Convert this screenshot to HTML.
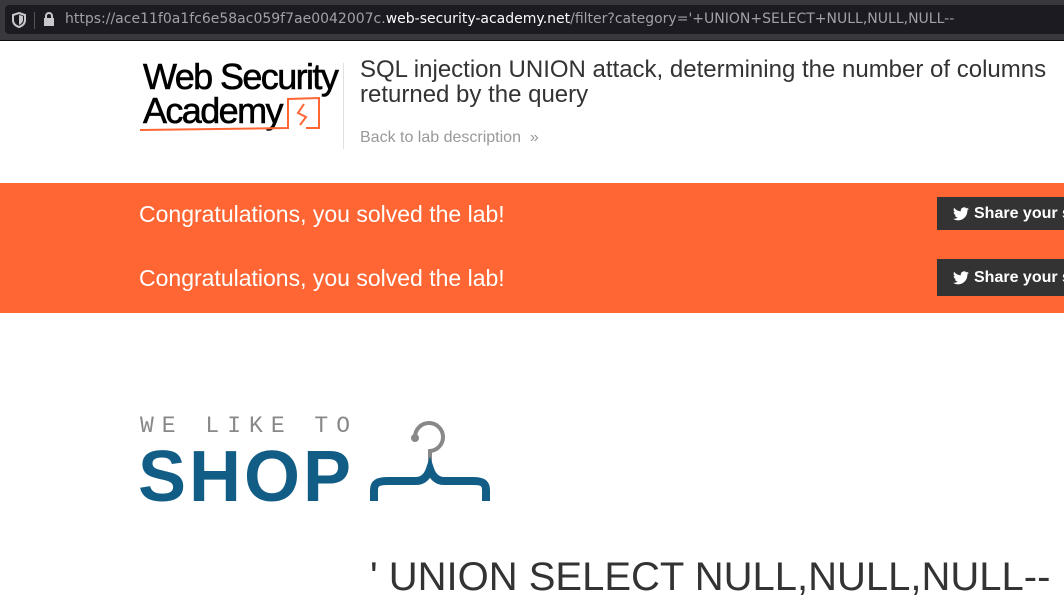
<!DOCTYPE html>
<html><head><style>
body{margin:0;width:1064px;height:615px;overflow:hidden;background:#fff;font-family:"Liberation Sans",sans-serif;position:relative}
.bar{position:absolute;left:0;top:0;width:1064px;height:40px;background:#38383d}
.url{position:absolute;left:5px;top:5px;width:1070px;height:29px;background:#1c1b22;border-radius:4px}
.u{position:absolute;left:65px;top:11px;font-family:"DejaVu Sans",sans-serif;font-size:14px;color:#a0a0a8;white-space:nowrap}
.u b{font-weight:normal;color:#fbfbfe}
.a{position:absolute}
.sh{font-size:16px;font-weight:bold;color:#fff;white-space:nowrap}
</style></head><body>
<div class="bar"><div class="url"></div>
<svg class="a" style="left:12px;top:12px" width="14" height="16"><path d="M7 1 L13 3 V8 C13 12 10 14 7 15 C4 14 1 12 1 8 V3 Z" fill="none" stroke="#c8c8cc" stroke-width="2"/><path d="M7 3 V13 C9 12 11 10 11 8 V4Z" fill="#c8c8cc"/></svg>
<div class="a" style="left:34px;top:12px;width:1px;height:17px;background:#555"></div>
<svg class="a" style="left:43px;top:11px" width="12" height="16"><rect x="1" y="7" width="10" height="8" fill="#c8c8cc"/><path d="M3 7 V5 A3 3 0 0 1 9 5 V7" fill="none" stroke="#c8c8cc" stroke-width="2"/></svg>
<div class="u">https://ace11f0a1fc6e58ac059f7ae0042007c.<b>web-security-academy.net</b>/filter?category='+UNION+SELECT+NULL,NULL,NULL--</div>
</div>
<div class="a" style="left:0;top:40px;width:1064px;height:1px;background:#0c0c0d"></div>
<div class="a" style="left:143px;top:60px;font-size:36px;letter-spacing:-1.6px;color:#000;line-height:34px;-webkit-text-stroke:0.6px #000">Web Security<br>Academy</div>
<svg class="a" style="left:138px;top:95px" width="185" height="40"><path d="M2 35 L150 33 L150 4 L181 3 L181 33 L168 33" fill="none" stroke="#ff6633" stroke-width="2"/><path d="M166 9 L160 18 L168 22 L162 30" fill="none" stroke="#ff6633" stroke-width="2"/></svg>
<div class="a" style="left:343px;top:63px;width:1px;height:86px;background:#e0e0e0"></div>
<div class="a" style="left:360px;top:57px;font-size:24px;color:#333;line-height:25px;width:700px">SQL injection UNION attack, determining the number of columns returned by the query</div>
<div class="a" style="left:360px;top:129px;font-size:16px;color:#999">Back to lab description &nbsp;»</div>
<div class="a" style="left:0;top:183px;width:1064px;height:130px;background:#ff6633"></div>
<div class="a" style="left:139px;top:201px;font-size:23px;color:#fff">Congratulations, you solved the lab!</div>
<div class="a" style="left:139px;top:265px;font-size:23px;color:#fff">Congratulations, you solved the lab!</div>
<div class="a" style="left:937px;top:197px;width:140px;height:33px;background:#333"></div>
<div class="a" style="left:937px;top:259px;width:140px;height:37px;background:#333"></div>
<svg class="a" style="left:953px;top:207px" width="16" height="14" viewBox="0 0 24 20"><path d="M24 2.4a10 10 0 0 1-2.8.8A5 5 0 0 0 23.3.4a10 10 0 0 1-3.1 1.2A4.9 4.9 0 0 0 11.8 6 14 14 0 0 1 1.7.9a4.9 4.9 0 0 0 1.5 6.6A4.9 4.9 0 0 1 1 6.9a4.9 4.9 0 0 0 3.9 4.9 5 5 0 0 1-2.2.1 4.9 4.9 0 0 0 4.6 3.4A9.9 9.9 0 0 1 0 17.3 14 14 0 0 0 7.5 19.5c9.1 0 14-7.5 14-14v-.6A10 10 0 0 0 24 2.4z" fill="#fff"/></svg>
<svg class="a" style="left:953px;top:271px" width="16" height="14" viewBox="0 0 24 20"><path d="M24 2.4a10 10 0 0 1-2.8.8A5 5 0 0 0 23.3.4a10 10 0 0 1-3.1 1.2A4.9 4.9 0 0 0 11.8 6 14 14 0 0 1 1.7.9a4.9 4.9 0 0 0 1.5 6.6A4.9 4.9 0 0 1 1 6.9a4.9 4.9 0 0 0 3.9 4.9 5 5 0 0 1-2.2.1 4.9 4.9 0 0 0 4.6 3.4A9.9 9.9 0 0 1 0 17.3 14 14 0 0 0 7.5 19.5c9.1 0 14-7.5 14-14v-.6A10 10 0 0 0 24 2.4z" fill="#fff"/></svg>
<div class="a sh" style="left:974px;top:205px">Share your s</div>
<div class="a sh" style="left:974px;top:269px">Share your s</div>
<div class="a" style="left:140px;top:413px;font-family:'Liberation Mono',monospace;font-size:23px;letter-spacing:8px;color:#888">WE LIKE TO</div>
<div class="a" style="left:138px;top:436px;font-size:72px;font-weight:bold;color:#125d85;letter-spacing:3px">SHOP</div>
<svg class="a" style="left:370px;top:415px" width="120" height="90"><path d="M45 22 A14 14 0 1 1 60 36 V48" fill="none" stroke="#888" stroke-width="4"/><circle cx="45" cy="23" r="4" fill="#888"/><path d="M4 86 V75 C4 68 8 66 18 66 H46 C54 66 58 60 60 54 C62 60 66 66 74 66 H104 C112 66 116 68 116 75 V86" fill="none" stroke="#125d85" stroke-width="8"/></svg>
<div class="a" style="left:370px;top:555px;font-size:40px;color:#333">' UNION SELECT NULL,NULL,NULL--</div>
</body></html>
